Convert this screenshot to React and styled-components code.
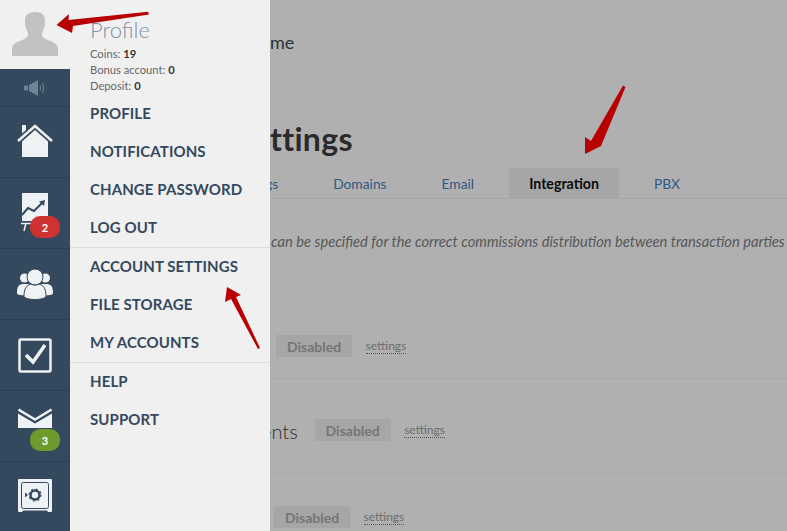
import React from "react";
import styled, { createGlobalStyle } from "styled-components";

const Global = createGlobalStyle`
  html, body { margin: 0; padding: 0; height: 100%; }
  body { font-family: "Lato", "Liberation Sans", sans-serif; overflow: hidden; background: #b0b0b0; }
  * { box-sizing: border-box; }
`;

const Page = styled.div`
  position: relative;
  display: flex;
  width: 787px;
  height: 531px;
  overflow: hidden;
`;

const Rail = styled.nav`
  flex: 0 0 70px;
  display: flex;
  flex-direction: column;
  background: #34495e;
`;

const Avatar = styled.div`
  flex: none;
  height: 69px;
  background: #f0f0f0;
  display: flex;
  justify-content: center;
  padding-top: 12px;
`;

const SoundRow = styled.div`
  flex: none;
  height: 38px;
  display: flex;
  align-items: center;
  justify-content: center;
  border-bottom: 1px solid #2b3e52;
`;

const RailItem = styled.div`
  position: relative;
  flex: none;
  height: 71px;
  display: flex;
  align-items: center;
  justify-content: center;
  border-bottom: 1px solid #2b3e52;
  &:last-child { border-bottom: 0; }
`;

const Badge = styled.span`
  position: absolute;
  left: 30px;
  top: 38px;
  width: 30px;
  height: 22px;
  border-radius: 10px;
  background: ${(p) => p.$color};
  color: #fff;
  font: 700 11px "Lato", sans-serif;
  display: flex;
  align-items: center;
  justify-content: center;
`;

const Menu = styled.aside`
  flex: 0 0 200px;
  background: #f0f0f0;
`;

const ProfileHead = styled.div`
  height: 95px;
  padding: 18px 0 0 20px;
`;

const ProfileTitle = styled.div`
  font-size: 22px;
  font-weight: 300;
  line-height: 24px;
  color: #7f92a8;
  margin-bottom: 4px;
`;

const Stat = styled.div`
  font-size: 11.2px;
  line-height: 16px;
  color: #666;
  b { color: #333; font-weight: 700; }
`;

const MenuGroup = styled.div`
  border-top: ${(p) => (p.$divided ? "1px solid #dcdcdc" : "0")};
`;

const MenuLink = styled.a`
  display: flex;
  align-items: center;
  height: 38px;
  padding: 0 0 3px 20px;
  font-size: 15px;
  font-weight: 700;
  letter-spacing: 0.1px;
  color: #34495e;
`;

const Main = styled.main`
  flex: 1;
  min-width: 0;
  overflow: hidden;
  padding-top: 30px;
  white-space: nowrap;
`;

const Crumb = styled.div`
  font-size: 18px;
  line-height: 24px;
  color: #2a3038;
`;

const Title = styled.h1`
  margin: 65px 0 0;
  font-size: 32px;
  font-weight: 700;
  letter-spacing: 0.3px;
  line-height: 40px;
  color: #2a2a2a;
`;

const Tabs = styled.div`
  display: flex;
  gap: 15px;
  height: 31px;
  margin-top: 9px;
  border-bottom: 1px solid #a6a6a6;
`;

const Tab = styled.a`
  flex: none;
  display: flex;
  align-items: center;
  height: 30px;
  margin-left: ${(p) => p.$shift || 0}px;
  padding: 0 20px;
  font-size: ${(p) => (p.$active ? 14.2 : 13.8)}px;
  font-weight: ${(p) => (p.$active ? 700 : 400)};
  color: ${(p) => (p.$active ? "#0c0c0c" : "#2f5a80")};
  background: ${(p) => (p.$active ? "#a6a6a6" : "transparent")};
`;

const Note = styled.p`
  margin: 33px 0 34px 1px;
  font-size: 14.7px;
  line-height: 18px;
  font-style: italic;
  color: #575757;
`;

const Row = styled.div`
  display: flex;
  align-items: flex-start;
  height: 95px;
  padding: ${(p) => p.$top}px 0 0 ${(p) => p.$left}px;
  border-bottom: 1px solid ${(p) => (p.$last ? "transparent" : "#a8a8a8")};
`;

const RowLabel = styled.span`
  margin: 0 17px 0 -9px;
  font-size: 20px;
  line-height: 24px;
  font-weight: 300;
  color: #2c2c2c;
`;

const Status = styled.span`
  width: 76px;
  height: 22px;
  background: #a6a6a6;
  color: #757575;
  font-size: 14px;
  font-weight: 700;
  display: flex;
  align-items: center;
  justify-content: center;
`;

const SettingsLink = styled.a`
  margin: 4px 0 0 13.500px;
  font-size: 12px;
  line-height: 14px;
  color: #6c6c6c;
  border-bottom: 1px dotted #555;
`;

const Arrows = styled.svg`
  position: absolute;
  left: 0;
  top: 0;
  pointer-events: none;
`;

const IconLight = "#eef2f4";
const Navy = "#34495e";

const StatusRow = ({ label, top, left, last }) => (
  <Row $top={top} $left={left} $last={last}>
    {label && <RowLabel>{label}</RowLabel>}
    <Status>Disabled</Status>
    <SettingsLink>settings</SettingsLink>
  </Row>
);

export default function App() {
  return (
    <Page>
      <Global />
      <Rail>
        <Avatar>
          <svg width="46" height="44" viewBox="0 0 46 44">
            <path fill="#c2c2c2" d="M23 0c7 0 10 3 10 9 0 4-.5 6-1.500 8.500-.8 2-1.500 3-1.500 5 0 3 3 4.500 7 6 5 2 9 3.500 9 8.500v7H0v-7c0-5 4-6.500 9-8.500 4-1.500 7-3 7-6 0-2-.7-3-1.500-5C13.500 15 13 13 13 9c0-6 3-9 10-9z" />
          </svg>
        </Avatar>
        <SoundRow>
          <svg width="22" height="16" viewBox="0 0 22 16">
            <path fill="#6f8296" d="M0 5.500h4v5H0zM5 5l9-5v16l-9-5z" />
            <path fill="none" stroke="#6f8296" strokeWidth="1" d="M16 5c1 2 1 4 0 6M18.500 3c1.500 3 1.500 7 0 10" />
          </svg>
        </SoundRow>
        <RailItem>
          <svg width="36" height="34" viewBox="0 0 36 34" style={{ marginTop: -2 }}>
            <path fill={IconLight} d="M5 1h4v5L5 9.500z" />
            <path fill="none" stroke={IconLight} strokeWidth="2.500" d="M1 17L18 2l17 15" />
            <path fill={IconLight} d="M18 6L31 17.500V33H5V17.500z" />
          </svg>
        </RailItem>
        <RailItem>
          <svg width="30" height="40" viewBox="0 0 30 40" style={{ marginRight: 4 }}>
            <path fill={IconLight} d="M4 0h26v28H4z" />
            <path fill="none" stroke={Navy} strokeWidth="2" d="M4 22l6-7 6 3 9-9" />
            <path fill={Navy} d="M21 8.500L27 7l-1 6z" />
            <path fill="none" stroke={IconLight} strokeWidth="1.500" d="M3 30.500h18M8 30l-2 8M15 30v5" />
          </svg>
          <Badge $color="#d03232">2</Badge>
        </RailItem>
        <RailItem>
          <svg width="36" height="31" viewBox="0 0 36 31">
            <circle cx="7.500" cy="9" r="4.500" fill={IconLight} />
            <circle cx="28.500" cy="9" r="4.500" fill={IconLight} />
            <path fill={IconLight} d="M0 24c0-7 2-9 7-9h5v12l-9-1c-2-.3-3-1-3-2zM36 24c0-7-2-9-7-9h-5v12l9-1c2-.3 3-1 3-2z" />
            <circle cx="18" cy="8" r="8" fill={IconLight} stroke={Navy} />
            <path fill={IconLight} stroke={Navy} d="M7 27c0-8 3-11 7-12 3 1.500 5 1.500 8 0 4 1 7 4 7 12 0 2-5 3.500-11 3.500S7 29 7 27z" />
          </svg>
        </RailItem>
        <RailItem>
          <svg width="34" height="35" viewBox="0 0 34 35">
            <rect x="1.500" y="1.500" width="31" height="32" rx="1.500" fill="none" stroke={IconLight} strokeWidth="2.500" />
            <path fill="none" stroke={IconLight} strokeWidth="3.500" d="M8 17l7 7L27 7" />
          </svg>
        </RailItem>
        <RailItem>
          <svg width="34" height="21" viewBox="0 0 34 21" style={{ marginTop: -15 }}>
            <path fill="none" stroke={IconLight} strokeWidth="2.500" d="M.5 1.500l16.500 10 16.500-10" />
            <path fill={IconLight} d="M0 5.500l17 10 17-10V20H0z" />
          </svg>
          <Badge $color="#6f9a2b">3</Badge>
        </RailItem>
        <RailItem>
          <svg width="34" height="34" viewBox="0 0 34 34" style={{ marginBottom: 4 }}>
            <path fill={IconLight} d="M1 0h32a1 1 0 0 1 1 1v31a1 1 0 0 1-1 1h-3l-1-1.500H5L4 33H1a1 1 0 0 1-1-1V1a1 1 0 0 1 1-1z" />
            <rect x="3.500" y="3.500" width="27" height="26" rx="2" fill="none" stroke={Navy} />
            <circle cx="17" cy="16" r="4.500" fill="none" stroke={Navy} strokeWidth="2.500" />
            <circle cx="17" cy="16" r="6" fill="none" stroke={Navy} strokeWidth="1.200" strokeDasharray="2 2.700" />
            <path fill={Navy} d="M7 13.500l3 2.500-3 2.500z" />
          </svg>
        </RailItem>
      </Rail>

      <Menu>
        <ProfileHead>
          <ProfileTitle>Profile</ProfileTitle>
          <Stat>Coins: <b>19</b></Stat>
          <Stat>Bonus account: <b>0</b></Stat>
          <Stat>Deposit: <b>0</b></Stat>
        </ProfileHead>
        <MenuGroup>
          <MenuLink>PROFILE</MenuLink>
          <MenuLink>NOTIFICATIONS</MenuLink>
          <MenuLink>CHANGE PASSWORD</MenuLink>
          <MenuLink>LOG OUT</MenuLink>
        </MenuGroup>
        <MenuGroup $divided>
          <MenuLink>ACCOUNT SETTINGS</MenuLink>
          <MenuLink>FILE STORAGE</MenuLink>
          <MenuLink>MY ACCOUNTS</MenuLink>
        </MenuGroup>
        <MenuGroup $divided>
          <MenuLink>HELP</MenuLink>
          <MenuLink>SUPPORT</MenuLink>
        </MenuGroup>
      </Menu>

      <Main>
        <Crumb>me</Crumb>
        <Title>ttings</Title>
        <Tabs>
          <Tab $shift={-25}>gs</Tab>
          <Tab>Domains</Tab>
          <Tab>Email</Tab>
          <Tab $active>Integration</Tab>
          <Tab>PBX</Tab>
        </Tabs>
        <Note>can be specified for the correct commissions distribution between transaction parties</Note>
        <StatusRow top={51} left={6} />
        <StatusRow top={40} left={0} label="ents" />
        <StatusRow top={32} left={4} last />
      </Main>

      <Arrows width="787" height="531" viewBox="0 0 787 531">
        <path fill="#b80000" d="M148 11.700L149 14.500 73 26 72 33 56.500 25 69 14 68.500 20z" />
        <path fill="#b80000" d="M227 287L241 295 236 297 260 348 258 349 231 299 225 302z" />
        <path fill="#b80000" d="M623 85.500L625.500 87 601 146 585 154 585 137 591 141z" />
      </Arrows>
    </Page>
  );
}
